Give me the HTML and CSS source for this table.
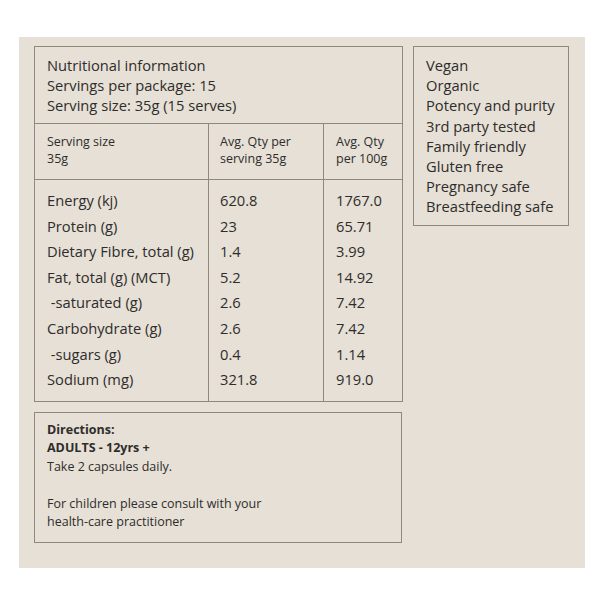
FILE: index.html
```html
<!DOCTYPE html>
<html>
<head>
<meta charset="utf-8">
<link rel="stylesheet" href="styles.css">
</head>
<body>
<div class="panel">
  <div class="main">
    <table class="nutri">
      <colgroup><col class="c1"><col class="c2"><col class="c3"></colgroup>
      <tr>
        <td colspan="3" class="title">Nutritional information<br>Servings per package: 15<br>Serving size: 35g (15 serves)</td>
      </tr>
      <tr class="head">
        <td>Serving size<br>35g</td>
        <td>Avg. Qty per<br>serving 35g</td>
        <td>Avg. Qty<br>per 100g</td>
      </tr>
      <tr class="body">
        <td>
          <div>Energy (kj)</div>
          <div>Protein (g)</div>
          <div>Dietary Fibre, total (g)</div>
          <div>Fat, total (g) (MCT)</div>
          <div>&nbsp;-saturated (g)</div>
          <div>Carbohydrate (g)</div>
          <div>&nbsp;-sugars (g)</div>
          <div>Sodium (mg)</div>
        </td>
        <td>
          <div>620.8</div>
          <div>23</div>
          <div>1.4</div>
          <div>5.2</div>
          <div>2.6</div>
          <div>2.6</div>
          <div>0.4</div>
          <div>321.8</div>
        </td>
        <td>
          <div>1767.0</div>
          <div>65.71</div>
          <div>3.99</div>
          <div>14.92</div>
          <div>7.42</div>
          <div>7.42</div>
          <div>1.14</div>
          <div>919.0</div>
        </td>
      </tr>
    </table>
    <div class="directions">
      <div class="strong">Directions:</div>
      <div class="strong">ADULTS - 12yrs +</div>
      <div>Take 2 capsules daily.</div>
      <div>&nbsp;</div>
      <div>For children please consult with your</div>
      <div>health-care practitioner</div>
    </div>
  </div>
  <div class="features">
    <div>Vegan</div>
    <div>Organic</div>
    <div>Potency and purity</div>
    <div>3rd party tested</div>
    <div>Family friendly</div>
    <div>Gluten free</div>
    <div>Pregnancy safe</div>
    <div>Breastfeeding safe</div>
  </div>
</div>
</body>
</html>
```
FILE: styles.css
```css
html, body {
  margin: 0;
  padding: 0;
  background: #ffffff;
}
body {
  padding: 37px 15px 0 19px;
  font-family: "Open Sans", "Noto Sans", sans-serif;
  color: #2e2d2b;
}
.panel {
  width: 566px;
  height: 531px;
  box-sizing: border-box;
  background: #e6e0d6;
  padding: 9px 16px 0 15px;
  display: flex;
  align-items: flex-start;
  gap: 11px;
}
.main {
  width: 368px;
  display: flex;
  flex-direction: column;
  gap: 10px;
}
.nutri {
  width: 368px;
  border-collapse: collapse;
  table-layout: fixed;
}
.c1 { width: 174px; }
.c2 { width: 115px; }
.c3 { width: 79px; }
.nutri td {
  border: 1px solid #8e887f;
  vertical-align: top;
  padding: 0 0 0 12px;
}
.nutri td + td { padding-left: 11px; }
.nutri td + td + td { padding-left: 12px; }
.title {
  font-size: 14.7px;
  line-height: 20px;
  padding: 8px 12px 8px 12px !important;
}
.head td {
  font-size: 12.5px;
  line-height: 17px;
  height: 56px;
  box-sizing: border-box;
  padding-top: 9px;
}
.body td {
  font-size: 14.7px;
  line-height: 25.6px;
  padding-top: 8px;
  padding-bottom: 8px;
  white-space: nowrap;
}
.directions {
  border: 1px solid #8e887f;
  padding: 8px 12px 10px 12px;
  font-size: 12.5px;
  line-height: 18.5px;
}
.strong { font-weight: 700; }
.features {
  width: 156px;
  box-sizing: border-box;
  border: 1px solid #8e887f;
  padding: 8px 12px 8px 12px;
  font-size: 14.7px;
  line-height: 20.2px;
  white-space: nowrap;
}
```
